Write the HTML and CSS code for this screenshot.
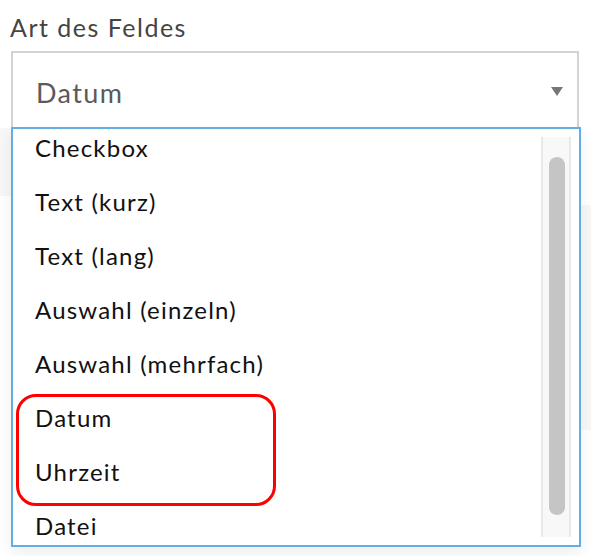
FILE: index.html
```html
<!DOCTYPE html>
<html lang="de">
<head>
<meta charset="utf-8">
<title>Art des Feldes</title>
<link rel="stylesheet" href="styles.css">
</head>
<body>
<div class="page">
  <div class="backdrop backdrop-left"></div>
  <div class="backdrop backdrop-right"></div>
  <div class="field">
    <div class="label">Art des Feldes</div>
    <div class="select">
      <span class="value">Datum</span>
      <span class="caret"></span>
    </div>
    <div class="list">
      <ul class="options">
        <li>Checkbox</li>
        <li>Text (kurz)</li>
        <li>Text (lang)</li>
        <li>Auswahl (einzeln)</li>
        <li>Auswahl (mehrfach)</li>
        <li>Datum</li>
        <li>Uhrzeit</li>
        <li>Datei</li>
      </ul>
      <div class="track"><div class="thumb"></div></div>
    </div>
  </div>
  <div class="highlight"></div>
</div>
</body>
</html>
```
FILE: styles.css
```css
html, body {
  margin: 0;
  padding: 0;
  background: #fff;
}
body {
  font-family: Lato, "Noto Sans", "Liberation Sans", sans-serif;
  color: #111;
}
.page {
  position: relative;
  width: 591px;
  height: 556px;
  overflow: hidden;
}
.backdrop {
  position: absolute;
  background: #f7f7f7;
}
.backdrop-left {
  left: 0;
  top: 128px;
  width: 12px;
  height: 68px;
}
.backdrop-right {
  left: 581px;
  top: 205px;
  width: 10px;
  height: 225px;
}
.field {
  position: relative;
  padding: 13px 0 0 11px;
}
.label {
  font-size: 25px;
  line-height: 28px;
  letter-spacing: 1.5px;
  color: #444;
  margin-left: -1px;
  height: 38px;
}
.select {
  box-sizing: border-box;
  width: 568px;
  height: 76px;
  border: 2px solid #d3d3d3;
  border-bottom: none;
  display: flex;
  align-items: center;
  justify-content: space-between;
  padding: 4px 14px 0 23px;
  background: #fff;
}
.value {
  font-size: 27px;
  letter-spacing: 1.4px;
  color: #5a5a5a;
}
.caret {
  width: 0;
  height: 0;
  border-left: 6px solid transparent;
  border-right: 6px solid transparent;
  border-top: 9px solid #777;
  margin-bottom: 2px;
}
.list {
  box-sizing: border-box;
  width: 570px;
  height: 420px;
  border: 2px solid #62ade4;
  background: #fff;
  display: flex;
  box-shadow: 0 6px 14px rgba(0, 0, 0, 0.07);
}
.options {
  flex: 1;
  list-style: none;
  margin: 0;
  padding: 0 0 0 22px;
  overflow: hidden;
}
.options li {
  font-size: 24px;
  letter-spacing: 1.2px;
  line-height: 54px;
  height: 54px;
  color: #111;
}
.options li:first-child {
  margin-top: -8px;
}
.track {
  box-sizing: border-box;
  width: 30px;
  margin: 8px 8px 8px 0;
  background: #f8f8f8;
  border-left: 2px solid #e9e9e9;
  border-right: 2px solid #e9e9e9;
  padding: 20px 4px 22px 6px;
  display: flex;
}
.thumb {
  width: 16px;
  flex: 1;
  background: #c5c5c5;
  border-radius: 8px;
}
.highlight {
  position: absolute;
  left: 16px;
  top: 394px;
  width: 260px;
  height: 112px;
  box-sizing: border-box;
  border: 3px solid #f00;
  border-radius: 20px;
}
```
